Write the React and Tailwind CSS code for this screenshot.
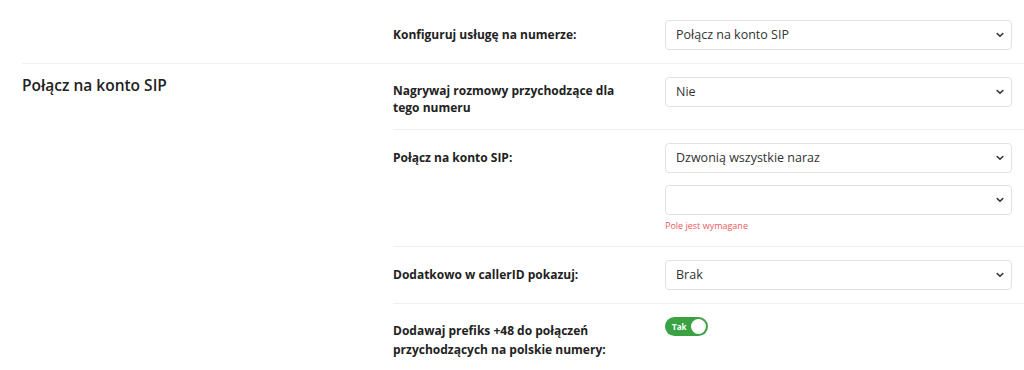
import React from 'react';

const font = { fontFamily: '"Open Sans", "DejaVu Sans", sans-serif' };

function Chevron() {
  return (
    <svg width="8" height="6" viewBox="0 0 8 6" className="absolute right-[8px] top-1/2 -translate-y-1/2 pointer-events-none">
      <path d="M1.2 1.5 L4 4.3 L6.8 1.5" fill="none" stroke="#333" strokeWidth="1.6" strokeLinecap="round" strokeLinejoin="round" />
    </svg>
  );
}

function Select({ value }) {
  return (
    <div className="relative w-[347px] h-[30px]">
      <div className="h-full w-full border border-[#e2e2e2] rounded-[4px] bg-white pl-[10px] flex items-center text-[12.5px] text-[#333]">
        {value}
      </div>
      <Chevron />
    </div>
  );
}

function Row({ label, children, last, labelClass = 'leading-[17px] pt-[6px]' }) {
  return (
    <div className={`flex py-[13px] ${last ? '' : 'border-b border-[#f0f0f0]'}`}>
      <div className={`flex-1 pr-4 text-[12px] font-bold text-[#222] ${labelClass}`}>{label}</div>
      <div className="w-[347px] mr-[12px] flex flex-col gap-[12px]">{children}</div>
    </div>
  );
}

function Toggle() {
  return (
    <div className="w-[43px] h-[19px] rounded-full bg-[#3ba244] flex items-center justify-between pl-[7px] pr-[2px]">
      <span className="text-[8px] font-bold text-white leading-none">Tak</span>
      <span className="w-[15px] h-[15px] rounded-full bg-white" />
    </div>
  );
}

export default function App() {
  return (
    <div className="bg-white min-h-[370px] pl-[22px]" style={font}>
      <div className="flex border-b border-[#f0f0f0]">
        <div className="w-[371px]" />
        <div className="flex-1 pt-[7px]">
          <Row label="Konfiguruj usługę na numerze:" last>
            <Select value="Połącz na konto SIP" />
          </Row>
        </div>
      </div>
      <div className="flex">
        <div className="w-[371px] pt-[11px] text-[15.5px] font-semibold text-[#222] leading-[20px]">Połącz na konto SIP</div>
        <div className="flex-1">
          <Row label={<>Nagrywaj rozmowy przychodzące dla<br />tego numeru</>} labelClass="leading-[17px] pt-[5px]">
            <Select value="Nie" />
          </Row>
          <Row label="Połącz na konto SIP:">
            <Select value="Dzwonią wszystkie naraz" />
            <div>
              <Select value="" />
              <div className="mt-[4px] text-[9px] text-[#ec5a5a] leading-[14px]">Pole jest wymagane</div>
            </div>
          </Row>
          <Row label="Dodatkowo w callerID pokazuj:">
            <Select value="Brak" />
          </Row>
          <Row label={<>Dodawaj prefiks +48 do połączeń<br />przychodzących na polskie numery:</>} last labelClass="leading-[19px] pt-[4px]">
            <Toggle />
          </Row>
        </div>
      </div>
    </div>
  );
}
